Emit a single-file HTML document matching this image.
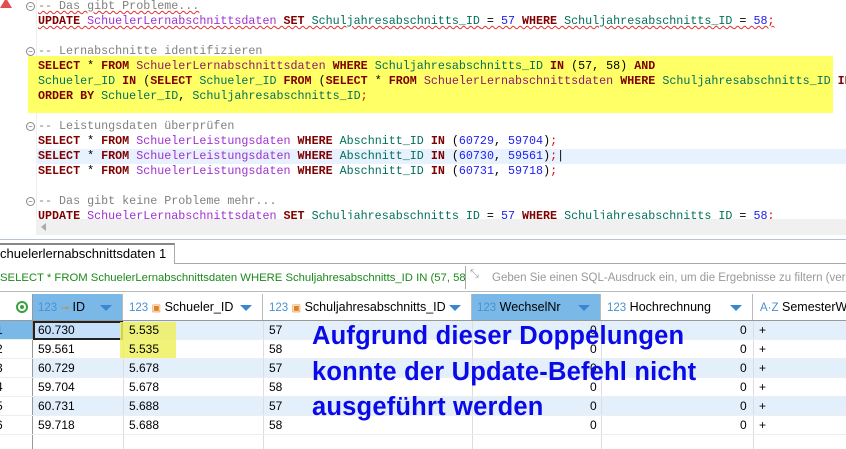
<!DOCTYPE html>
<html><head><meta charset="utf-8"><style>
*{margin:0;padding:0;box-sizing:border-box}
body{width:846px;height:449px;overflow:hidden;background:#fff;position:relative;font-family:"Liberation Sans",sans-serif}
.code{position:absolute;left:0;top:0;width:846px;height:219px;overflow:hidden}
.ln{position:absolute;left:38px;height:15px;line-height:15px;font-family:"Liberation Mono",monospace;font-size:11.7px;white-space:pre;color:#000}
.k{color:#7f0000;font-weight:bold}
.t{color:#8b1a6b}
.tp{color:#a030d0}
.c{color:#00705a}
.n{color:#2020f0}
.s{color:#e00000}
.cm{color:#808080}
.fold{position:absolute;left:26px;width:9px;height:9px;border:1px solid #888;border-radius:50%;font-size:8px;line-height:7px;text-align:center;color:#666}
.sq{text-decoration:underline wavy #e03030;text-decoration-thickness:1px}
.cell{position:absolute;font-size:12px;line-height:19px;height:19px}
.hd{position:absolute;top:294px;height:27px;font-size:12.5px;line-height:27px;border-right:1px solid #bbb;white-space:nowrap}
.b{color:#4a90d0;font-size:11.5px}
.arr{position:absolute;right:10px;top:11px;width:0;height:0;border-left:6px solid transparent;border-right:6px solid transparent;border-top:6px solid #3a86d0}
.ov{position:absolute;left:312px;color:#0a0ae8;font-weight:bold;font-size:25.5px;line-height:35px;white-space:nowrap;letter-spacing:0.2px}
</style></head><body>
<div class="code">
<div style="position:absolute;left:36px;top:0;width:1px;height:219px;background:#eee"></div>
<div style="position:absolute;left:28px;top:56px;width:805px;height:57px;background:#ffff66"></div>
<div style="position:absolute;left:36px;top:149px;width:810px;height:15px;background:#e8f2fe"></div>
<div style="position:absolute;left:0;top:-2px;width:0;height:0;border-left:6px solid transparent;border-right:6px solid transparent;border-bottom:10px solid #e05050"></div>
<div class="fold" style="top:2px">−</div>
<div class="fold" style="top:47px">−</div>
<div class="fold" style="top:122px">−</div>
<div class="fold" style="top:197px">−</div>
<div class="ln cm" style="top:-1px"><span class="sq">-- Das gibt Probleme...</span></div>
<div class="ln" style="top:14px"><span class="sq"><span class="k">UPDATE</span> <span class="tp">SchuelerLernabschnittsdaten</span> <span class="k">SET</span> <span class="c">Schuljahresabschnitts_ID</span> = <span class="n">57</span> <span class="k">WHERE</span> <span class="c">Schuljahresabschnitts_ID</span> = <span class="n">58</span><span class="s">;</span></span></div>
<div class="ln cm" style="top:44px">-- Lernabschnitte identifizieren</div>
<div class="ln" style="top:59px"><span class="k">SELECT</span> * <span class="k">FROM</span> <span class="t">SchuelerLernabschnittsdaten</span> <span class="k">WHERE</span> <span class="c">Schuljahresabschnitts_ID</span> <span class="k">IN</span> (57, 58) <span class="k">AND</span></div>
<div class="ln" style="top:74px"><span class="c">Schueler_ID</span> <span class="k">IN</span> (<span class="k">SELECT</span> <span class="c">Schueler_ID</span> <span class="k">FROM</span> (<span class="k">SELECT</span> * <span class="k">FROM</span> <span class="t">SchuelerLernabschnittsdaten</span> <span class="k">WHERE</span> <span class="c">Schuljahresabschnitts_ID</span> <span class="k">IN</span></div>
<div class="ln" style="top:89px"><span class="k">ORDER BY</span> <span class="c">Schueler_ID</span>, <span class="c">Schuljahresabschnitts_ID</span><span class="s">;</span></div>
<div class="ln cm" style="top:119px">-- Leistungsdaten überprüfen</div>
<div class="ln" style="top:134px"><span class="k">SELECT</span> * <span class="k">FROM</span> <span class="tp">SchuelerLeistungsdaten</span> <span class="k">WHERE</span> <span class="c">Abschnitt_ID</span> <span class="k">IN</span> (<span class="n">60729</span>, <span class="n">59704</span>)<span class="s">;</span></div>
<div class="ln" style="top:149px"><span class="k">SELECT</span> * <span class="k">FROM</span> <span class="tp">SchuelerLeistungsdaten</span> <span class="k">WHERE</span> <span class="c">Abschnitt_ID</span> <span class="k">IN</span> (<span class="n">60730</span>, <span class="n">59561</span>)<span class="s">;</span>|</div>
<div class="ln" style="top:164px"><span class="k">SELECT</span> * <span class="k">FROM</span> <span class="tp">SchuelerLeistungsdaten</span> <span class="k">WHERE</span> <span class="c">Abschnitt_ID</span> <span class="k">IN</span> (<span class="n">60731</span>, <span class="n">59718</span>)<span class="s">;</span></div>
<div class="ln cm" style="top:194px">-- Das gibt keine Probleme mehr...</div>
<div class="ln" style="top:209px"><span class="k">UPDATE</span> <span class="tp">SchuelerLernabschnittsdaten</span> <span class="k">SET</span> <span class="c">Schuljahresabschnitts_ID</span> = <span class="n">57</span> <span class="k">WHERE</span> <span class="c">Schuljahresabschnitts_ID</span> = <span class="n">58</span><span class="s">;</span></div>
</div>
<div style="position:absolute;left:36px;top:219px;width:810px;height:16px;background:#f0f0f0"></div>
<div style="position:absolute;left:41px;top:223px;width:0;height:0;border-top:4px solid transparent;border-bottom:4px solid transparent;border-right:5px solid #aaa"></div>
<div style="position:absolute;left:0;top:239px;width:846px;height:1px;background:#b8c4d4"></div>
<div style="position:absolute;left:0;top:243px;width:175px;height:21px;border-top:2px solid #888;border-right:1px solid #aaa;background:#fff;font-size:13px;line-height:18px;white-space:nowrap;overflow:hidden">chuelerlernabschnittsdaten 1 <span style="font-size:13px;margin-left:3px">✕</span></div>
<div style="position:absolute;left:175px;top:263px;width:671px;height:1px;background:#aaa"></div>
<div style="position:absolute;left:0;top:264px;width:465px;height:28px;font-size:11.3px;line-height:28px;white-space:nowrap;overflow:hidden"><span style="color:#1a8a1a">SELECT * FROM SchuelerLernabschnittsdaten WHERE Schuljahresabschnitts_ID IN (57, 58</span></div>
<div style="position:absolute;left:0;top:291px;width:846px;height:1px;background:#bbb"></div>
<div style="position:absolute;left:465px;top:266px;width:1px;height:23px;background:#aaa"></div>
<div style="position:absolute;left:470px;top:268px;font-size:11px;color:#999">⤡</div>
<div style="position:absolute;left:492px;top:264px;font-size:11.5px;line-height:28px;color:#999;white-space:nowrap">Geben Sie einen SQL-Ausdruck ein, um die Ergebnisse zu filtern (ver</div>
<!-- header -->
<div class="hd" style="left:0;width:33px;border-right:1px solid #999"><span style="position:absolute;left:16px;top:7px;width:12px;height:12px;border:2px solid #3aa040;border-radius:50%"></span><span style="position:absolute;left:20px;top:11px;width:4px;height:4px;background:#3aa040;border-radius:50%"></span></div>
<div class="hd" style="left:33px;width:90px;background:#7ab8e8;padding-left:5px"><span class="b">123</span> <span style="color:#e08020;font-size:10px">⊸</span> ID<span class="arr"></span></div>
<div class="hd" style="left:123px;width:140px;padding-left:6px"><span class="b">123</span> <span style="color:#e08020;font-size:10px">▣</span> Schueler_ID<span class="arr"></span></div>
<div class="hd" style="left:263px;width:209px;padding-left:6px;overflow:hidden"><span class="b">123</span> <span style="color:#e08020;font-size:10px">▣</span> Schuljahresabschnitts_ID<span class="arr"></span></div>
<div class="hd" style="left:472px;width:129px;background:#7ab8e8;padding-left:5px"><span class="b">123</span> WechselNr<span class="arr"></span></div>
<div class="hd" style="left:601px;width:152px;padding-left:6px"><span class="b">123</span> Hochrechnung<span class="arr"></span></div>
<div class="hd" style="left:753px;width:93px;padding-left:7px;border:none;overflow:hidden"><span class="b">A·Z</span> SemesterWert</div>
<div style="position:absolute;left:0;top:320px;width:846px;height:1px;background:#999"></div>
<!-- rows -->
<div style="position:absolute;left:33px;top:321px;width:813px;height:19px;background:#e4effc"></div>
<div style="position:absolute;left:33px;top:359px;width:813px;height:19px;background:#e4effc"></div>
<div style="position:absolute;left:33px;top:397px;width:813px;height:19px;background:#e4effc"></div>
<div style="position:absolute;left:0;top:321px;width:33px;height:19px;background:#7ab8e8"></div>
<div style="position:absolute;left:0;top:321px;width:33px;height:128px;border-right:1px solid #999"></div>
<div style="position:absolute;left:123px;top:321px;width:1px;height:128px;background:#ddd"></div>
<div style="position:absolute;left:263px;top:321px;width:1px;height:128px;background:#ddd"></div>
<div style="position:absolute;left:472px;top:321px;width:1px;height:128px;background:#ddd"></div>
<div style="position:absolute;left:601px;top:321px;width:1px;height:128px;background:#ddd"></div>
<div style="position:absolute;left:753px;top:321px;width:1px;height:128px;background:#ddd"></div>
<div style="position:absolute;left:0;top:339px;width:846px;height:1px;background:#eee"></div>
<div style="position:absolute;left:0;top:358px;width:846px;height:1px;background:#eee"></div>
<div style="position:absolute;left:0;top:377px;width:846px;height:1px;background:#eee"></div>
<div style="position:absolute;left:0;top:396px;width:846px;height:1px;background:#eee"></div>
<div style="position:absolute;left:0;top:415px;width:846px;height:1px;background:#eee"></div>
<div style="position:absolute;left:0;top:434px;width:846px;height:1px;background:#eee"></div>
<div style="position:absolute;left:33px;top:321px;width:90px;height:19px;background:#c6e0fa;border:2px solid #222"></div>
<div style="position:absolute;left:120px;top:322px;width:56px;height:36px;background:#eef060;opacity:.85"></div>
<div class="cell" style="left:-4px;top:321px">1</div><div class="cell" style="left:-4px;top:340px">2</div><div class="cell" style="left:-4px;top:359px">3</div><div class="cell" style="left:-4px;top:378px">4</div><div class="cell" style="left:-4px;top:397px">5</div><div class="cell" style="left:-4px;top:416px">6</div>
<div class="cell" style="left:38px;top:321px">60.730</div><div class="cell" style="left:38px;top:340px">59.561</div><div class="cell" style="left:38px;top:359px">60.729</div><div class="cell" style="left:38px;top:378px">59.704</div><div class="cell" style="left:38px;top:397px">60.731</div><div class="cell" style="left:38px;top:416px">59.718</div>
<div class="cell" style="left:129px;top:321px">5.535</div><div class="cell" style="left:129px;top:340px">5.535</div><div class="cell" style="left:129px;top:359px">5.678</div><div class="cell" style="left:129px;top:378px">5.678</div><div class="cell" style="left:129px;top:397px">5.688</div><div class="cell" style="left:129px;top:416px">5.688</div>
<div class="cell" style="left:269px;top:321px">57</div><div class="cell" style="left:269px;top:340px">58</div><div class="cell" style="left:269px;top:359px">57</div><div class="cell" style="left:269px;top:378px">58</div><div class="cell" style="left:269px;top:397px">57</div><div class="cell" style="left:269px;top:416px">58</div>
<div class="cell" style="left:590px;top:321px">0</div><div class="cell" style="left:590px;top:340px">0</div><div class="cell" style="left:590px;top:359px">0</div><div class="cell" style="left:590px;top:378px">0</div><div class="cell" style="left:590px;top:397px">0</div><div class="cell" style="left:590px;top:416px">0</div>
<div class="cell" style="left:740px;top:321px">0</div><div class="cell" style="left:740px;top:340px">0</div><div class="cell" style="left:740px;top:359px">0</div><div class="cell" style="left:740px;top:378px">0</div><div class="cell" style="left:740px;top:397px">0</div><div class="cell" style="left:740px;top:416px">0</div>
<div class="cell" style="left:759px;top:321px">+</div><div class="cell" style="left:759px;top:340px">+</div><div class="cell" style="left:759px;top:359px">+</div><div class="cell" style="left:759px;top:378px">+</div><div class="cell" style="left:759px;top:397px">+</div><div class="cell" style="left:759px;top:416px">+</div>
<div class="ov" style="top:319px">Aufgrund dieser Doppelungen</div>
<div class="ov" style="top:355px">konnte der Update-Befehl nicht</div>
<div class="ov" style="top:390px">ausgeführt werden</div>
</body></html>
